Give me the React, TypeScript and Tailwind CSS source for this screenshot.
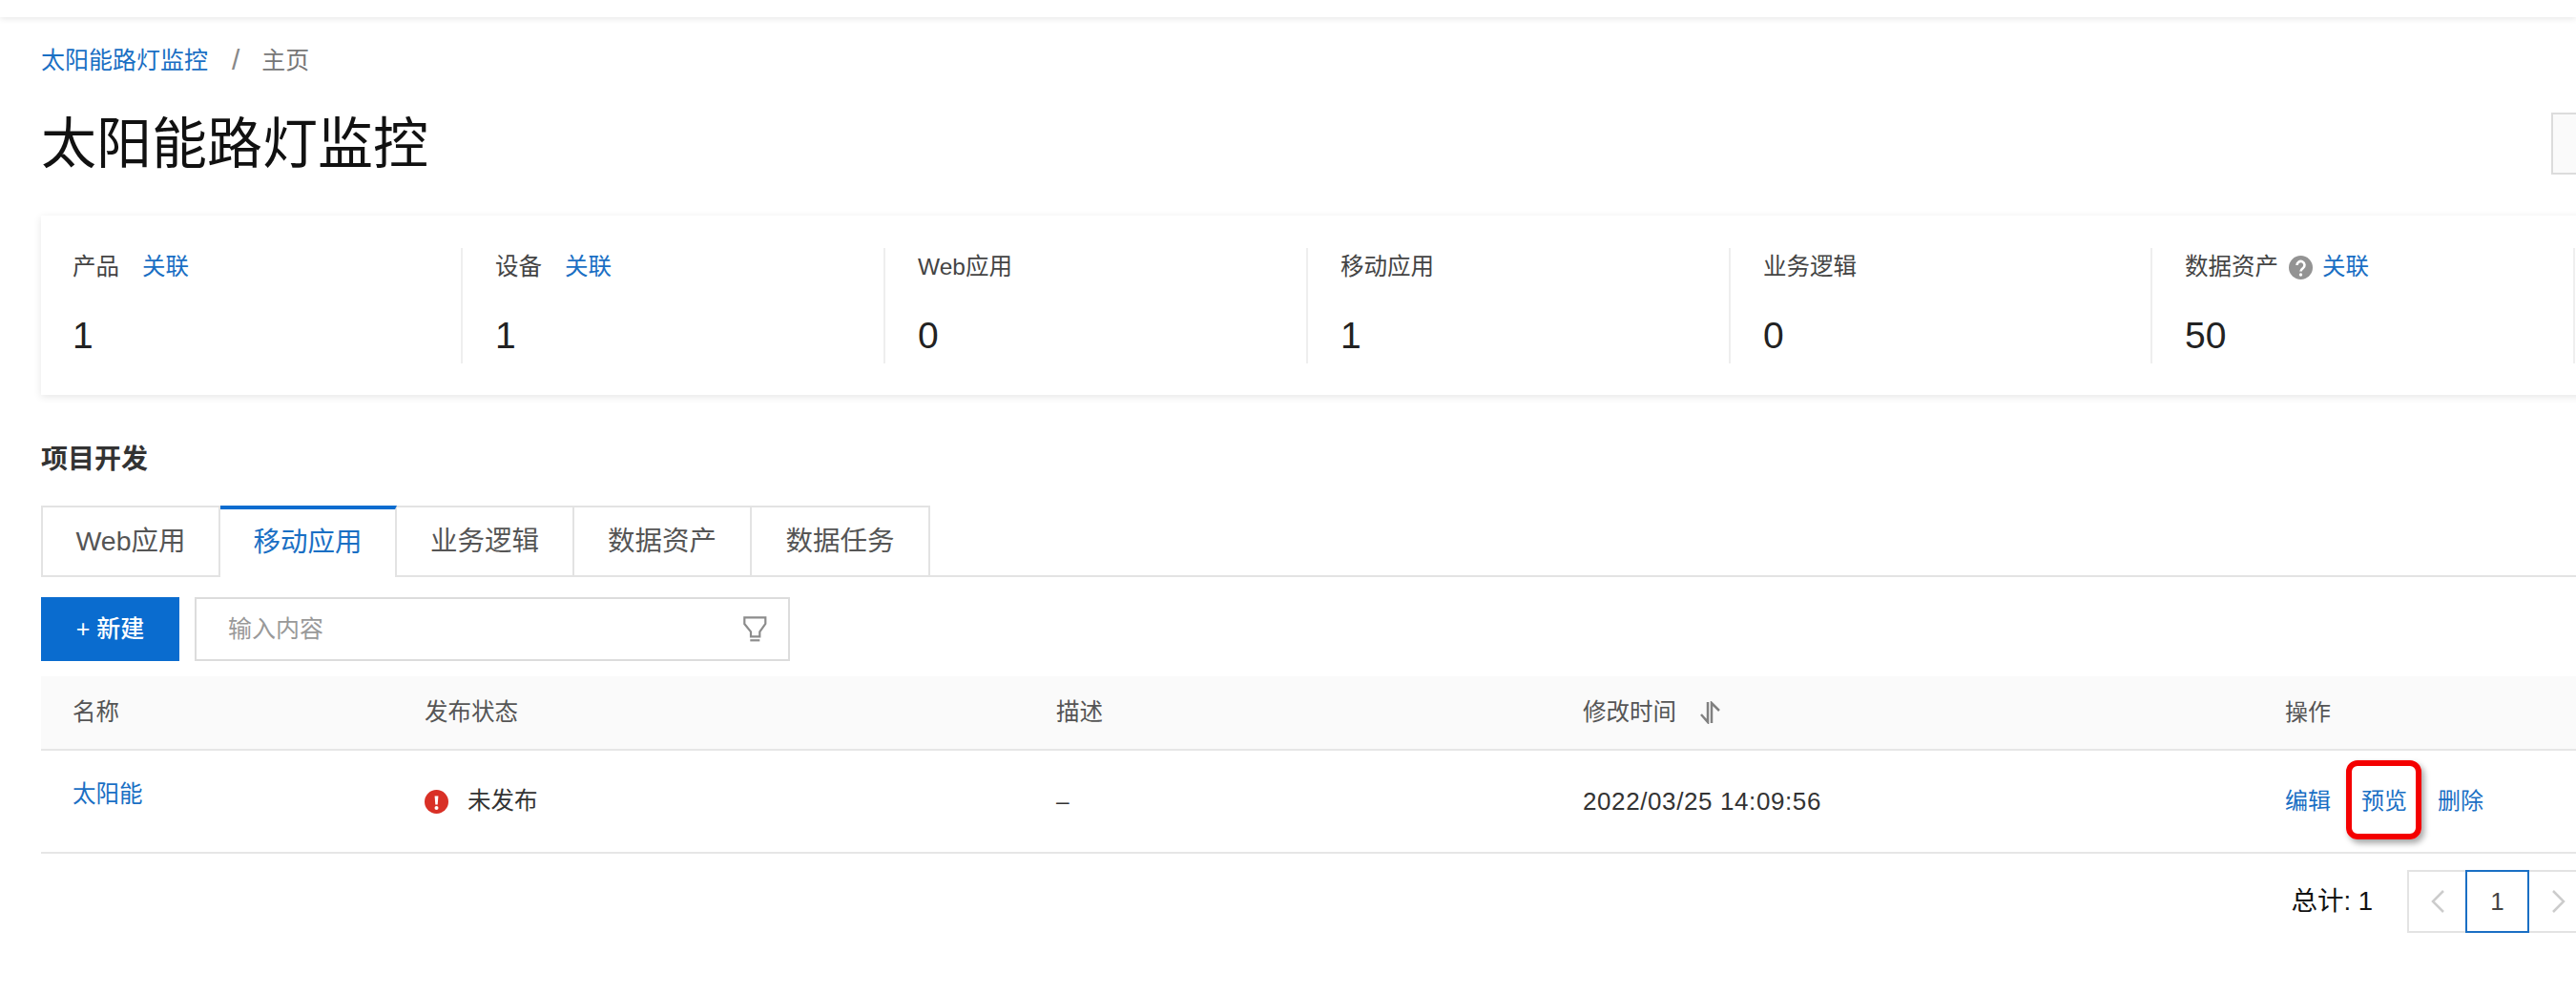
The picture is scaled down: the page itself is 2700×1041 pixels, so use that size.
const font = { fontFamily: '"Liberation Sans", "Noto Sans CJK SC", sans-serif' };

const stats = [
  { label: "产品", value: "1", link: true, width: "w-[442px]", pad: "pl-[33px]" },
  { label: "设备", value: "1", link: true, width: "w-[443px]", pad: "pl-[34px]" },
  { label: "Web应用", value: "0", width: "w-[443px]", pad: "pl-[34px]" },
  { label: "移动应用", value: "1", width: "w-[443px]", pad: "pl-[34px]" },
  { label: "业务逻辑", value: "0", width: "w-[442px]", pad: "pl-[34px]" },
  { label: "数据资产", value: "50", link: true, help: true, width: "w-[443px]", pad: "pl-[34px]" },
];

const tabs = [
  { name: "Web应用", width: "w-[188px]" },
  { name: "移动应用", width: "w-[185px]", active: true },
  { name: "业务逻辑", width: "w-[186px]" },
  { name: "数据资产", width: "w-[186px]" },
  { name: "数据任务", width: "w-[187px]" },
];

const columns = "grid grid-cols-[369px_662px_552px_736px_1fr] pl-[33px] items-center";

function HelpIcon() {
  return (
    <svg width="25" height="25" viewBox="0 0 25 25" className="ml-[11px] mr-[10px] shrink-0">
      <circle cx="12.5" cy="12.5" r="12.5" fill="#939393" />
      <path d="M8.5 10a4 4 0 1 1 6.3 3.2c-1.4 1-2.3 1.6-2.3 3.3" fill="none" stroke="#fff" strokeWidth="2.6" />
      <circle cx="12.5" cy="20" r="1.7" fill="#fff" />
    </svg>
  );
}

function FilterIcon() {
  return (
    <svg width="25" height="28" viewBox="0 0 25 28" fill="none" stroke="#8c8c8c" strokeWidth="2.2">
      <path d="M1.300 1.300H23.300V8L17.300 16.300V21.300H8V16.300L1.300 8Z" />
      <path d="M7.300 25.300H17.300" />
    </svg>
  );
}

function SortIcon() {
  return (
    <svg width="24" height="24" viewBox="0 0 24 24" fill="none" stroke="#808080" strokeWidth="2.500">
      <path d="M9 1V22L2 14" />
      <path d="M13 23V2L21 10" />
    </svg>
  );
}

function ErrorIcon() {
  return (
    <svg width="25" height="25" viewBox="0 0 25 25" className="shrink-0">
      <circle cx="12.500" cy="12.500" r="12.500" fill="#d93026" />
      <path d="M10.600 6.500H14.400L13.700 15.500H11.300Z" fill="#fff" />
      <circle cx="12.500" cy="19" r="2" fill="#fff" />
    </svg>
  );
}

function Chevron({ left }: { left?: boolean }) {
  return (
    <svg width="16" height="26" viewBox="0 0 16 26" fill="none" stroke="#cccccc" strokeWidth="2.500">
      <path d={left ? "M14 2L3 13L14 24" : "M2 2L13 13L2 24"} />
    </svg>
  );
}

export default function App() {
  return (
    <div style={font} className="w-[2700px] h-[1041px] overflow-hidden bg-white text-[#333333]">
      <div className="h-[18px] bg-white shadow-[0_2px_6px_rgba(0,0,0,0.09)]" />

      <div className="w-[2720px] pl-[43px]">
        <div className="pt-[27px] h-[63px] flex items-center text-[25px] leading-[36px]">
          <span className="text-[#1a6fc4]">太阳能路灯监控</span>
          <span className="ml-[25px] text-[30px] text-[#888888]">/</span>
          <span className="ml-[23px] text-[#777777]">主页</span>
        </div>

        <div className="mt-[36px] h-[66px] flex items-center justify-between">
          <h1 className="text-[58px] leading-[66px] pt-[2px] text-[#111111]">太阳能路灯监控</h1>
          <div className="w-[46px] h-[65px] border-2 border-[#dcdcdc] bg-[#fafafa] mt-[1px]" />
        </div>

        <div className="mt-[43px] h-[188px] flex items-center bg-white shadow-[0_2px_8px_rgba(0,0,0,0.1)]">
          {stats.map((s) => (
            <div key={s.label} className={`${s.width} ${s.pad} h-[121px] shrink-0 border-r-2 border-[#eeeeee]`}>
              <div className="h-[42px] flex items-center text-[24.5px] text-[#444444]">
                <span>{s.label}</span>
                {s.help && <HelpIcon />}
                {s.link && <span className={s.help ? "text-[#1a6fc4]" : "ml-[24px] text-[#1a6fc4]"}>关联</span>}
              </div>
              <div className="mt-[21px] text-[39px] leading-[58px] text-[#222222]">{s.value}</div>
            </div>
          ))}
        </div>

        <h2 className="mt-[48px] text-[28px] leading-[40px] font-bold text-[#333333]">项目开发</h2>

        <div className="mt-[28px] h-[75px] flex border-b-2 border-[#e3e3e3]">
          {tabs.map((t, i) => (
            <div
              key={t.name}
              className={
                t.active
                  ? `${t.width} h-[75px] pb-[3px] flex items-center justify-center bg-white border-t-[4px] border-r-2 border-t-[#0a6ccf] border-r-[#e3e3e3] text-[#1a6fc4] text-[28.5px]`
                  : `${t.width} h-[73px] flex items-center justify-center border-t-2 border-r-2 border-[#e3e3e3] text-[28.5px] text-[#555555] ${i === 0 ? "border-l-2" : ""}`
              }
            >
              {t.name}
            </div>
          ))}
        </div>

        <div className="mt-[21px] flex gap-[16px]">
          <div className="w-[145px] h-[67px] bg-[#0a6ccf] text-white text-[25px] font-medium flex items-center justify-center">
            + 新建
          </div>
          <div className="w-[624px] h-[67px] border-2 border-[#dcdcdc] flex items-center justify-between pl-[33px] pr-[22px] text-[25px] text-[#999999]">
            <span>输入内容</span>
            <FilterIcon />
          </div>
        </div>

        <div className={`${columns} mt-[16px] h-[78px] bg-[#fafafa] border-b-2 border-[#e6e6e6] text-[24.5px] text-[#555555]`}>
          <div>名称</div>
          <div>发布状态</div>
          <div>描述</div>
          <div className="flex items-center gap-[24px]">
            修改时间
            <SortIcon />
          </div>
          <div className="text-[24px]">操作</div>
        </div>

        <div className={`${columns} h-[108px] border-b-2 border-[#e6e6e6] text-[24.5px]`}>
          <div className="text-[#1a6fc4] mb-[14px]">太阳能</div>
          <div className="flex items-center gap-[20px] text-[#333333]">
            <ErrorIcon />
            未发布
          </div>
          <div>–</div>
          <div className="text-[26px] tracking-[0.6px]">2022/03/25 14:09:56</div>
          <div className="flex gap-[32px] text-[24px] text-[#1a6fc4]">
            <span>编辑</span>
            <span className="relative">
              预览
              <span className="absolute left-[-16px] top-[-25px] w-[79px] h-[83px] border-[6px] border-[#f40000] rounded-[12px] shadow-[3px_4px_6px_rgba(0,0,0,0.35)]" />
            </span>
            <span>删除</span>
          </div>
        </div>

        <div className="mt-[17px] pr-[1px] flex items-center justify-end">
          <span className="text-[27.5px] mr-[36px] text-[#111111]">总计: 1</span>
          <div className="flex h-[66px] border-2 border-[#e3e3e3]">
            <div className="w-[59px] flex items-center justify-center">
              <Chevron left />
            </div>
            <div className="w-[67px] -my-[2px] border-2 border-[#1a6fc4] flex items-center justify-center text-[26px] text-[#444444]">
              1
            </div>
            <div className="w-[66px] pr-[4px] flex items-center justify-center">
              <Chevron />
            </div>
          </div>
        </div>
      </div>
    </div>
  );
}
